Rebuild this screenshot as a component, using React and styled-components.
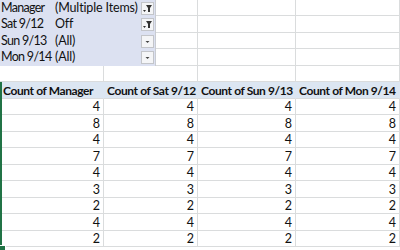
import React from "react";
import styled, { createGlobalStyle } from "styled-components";

const GlobalStyle = createGlobalStyle`
  body {
    margin: 0;
    background: #ffffff;
    overflow: hidden;
  }
`;

const filters = [
  { label: "Manager", value: "(Multiple Items)", filtered: true },
  { label: "Sat 9/12", value: "Off", filtered: true },
  { label: "Sun 9/13", value: "(All)", filtered: false },
  { label: "Mon 9/14", value: "(All)", filtered: false },
];

const headers = [
  "Count of Manager",
  "Count of Sat 9/12",
  "Count of Sun 9/13",
  "Count of Mon 9/14",
];

const counts = [4, 8, 4, 7, 4, 3, 2, 4, 2];

const rowHeight = (i) => (i % 2 === 0 ? 16 : 17);

const Sheet = styled.div`
  position: relative;
  width: 400px;
  height: 250px;
  overflow: hidden;
  font-family: Lato, "Liberation Sans", sans-serif;
  font-size: 12.5px;
  color: #111;
`;

const Row = styled.div`
  display: grid;
  grid-template-columns: ${(p) => p.$cols};
  height: ${(p) => p.$h}px;
`;

const FilterBlock = styled.div`
  display: grid;
  grid-template-columns: 54px 1fr 14px;
  align-items: center;
  background: #dce1f1;
  border-right: 1px solid #c9ccd2;
  padding-left: 1px;
`;

const FilterText = styled.span`
  white-space: nowrap;
  line-height: 1;
  letter-spacing: ${(p) => (p.$label ? "-0.7px" : "-0.15px")};
`;

const DropButton = styled.div`
  width: 11px;
  height: 11px;
  border: 1px solid #c3c5c9;
  background: #f4f5f7;
  display: flex;
  align-items: center;
  justify-content: center;
`;

const Cell = styled.div`
  box-sizing: border-box;
  border-right: 1px solid #dadcdd;
  border-bottom: 1px solid #dadcdd;
  display: flex;
  align-items: center;
  justify-content: ${(p) => (p.$num ? "flex-end" : "flex-start")};
  padding: 0 3px 0 2px;
  white-space: nowrap;
  overflow: hidden;
`;

const HeadCell = styled(Cell)`
  background: #dce6f2;
  border-right-color: #dce6f2;
  border-bottom-color: #dadcdd;
  font-size: 12px;
  font-weight: 700;
  letter-spacing: -0.4px;
  padding-left: 3px;
`;

const Selection = styled.div`
  position: absolute;
  left: 0;
  top: 82px;
  width: 2px;
  height: 165px;
  background: #217346;
`;

const Handle = styled.div`
  position: absolute;
  left: 0;
  top: 245px;
  width: 5px;
  height: 5px;
  background: #217346;
  border: 1px solid #fff;
  border-left: none;
`;

const FilterIcon = ({ filtered }) => (
  <svg width="11" height="11" viewBox="0 0 11 11">
    {filtered ? (
      <>
        <polygon points="1,7 4,7 2.5,9" fill="#333" />
        <polygon points="4,2 10,2 8,5 8,9 6,9 6,5" fill="#333" />
      </>
    ) : (
      <polygon points="3.5,5 7.5,5 5.5,7" fill="#444" />
    )}
  </svg>
);

const mainCols = "104px 94px 98px 104px";
const filterCols = "156px 42px 98px 104px";

export default function App() {
  return (
    <>
      <GlobalStyle />
      <Sheet>
        {filters.map((f, i) => (
          <Row key={f.label} $cols={filterCols} $h={rowHeight(i)}>
            <FilterBlock>
              <FilterText $label>{f.label}</FilterText>
              <FilterText>{f.value}</FilterText>
              <DropButton>
                <FilterIcon filtered={f.filtered} />
              </DropButton>
            </FilterBlock>
            <Cell />
            <Cell />
            <Cell />
          </Row>
        ))}
        <Row $cols={mainCols} $h={rowHeight(4)}>
          <Cell />
          <Cell />
          <Cell />
          <Cell />
        </Row>
        <Row $cols={mainCols} $h={rowHeight(5)}>
          {headers.map((h) => (
            <HeadCell key={h}>{h}</HeadCell>
          ))}
        </Row>
        {counts.map((n, i) => (
          <Row key={i} $cols={mainCols} $h={rowHeight(i + 6)}>
            <Cell $num>{n}</Cell>
            <Cell $num>{n}</Cell>
            <Cell $num>{n}</Cell>
            <Cell $num>{n}</Cell>
          </Row>
        ))}
        <Selection />
        <Handle />
      </Sheet>
    </>
  );
}
